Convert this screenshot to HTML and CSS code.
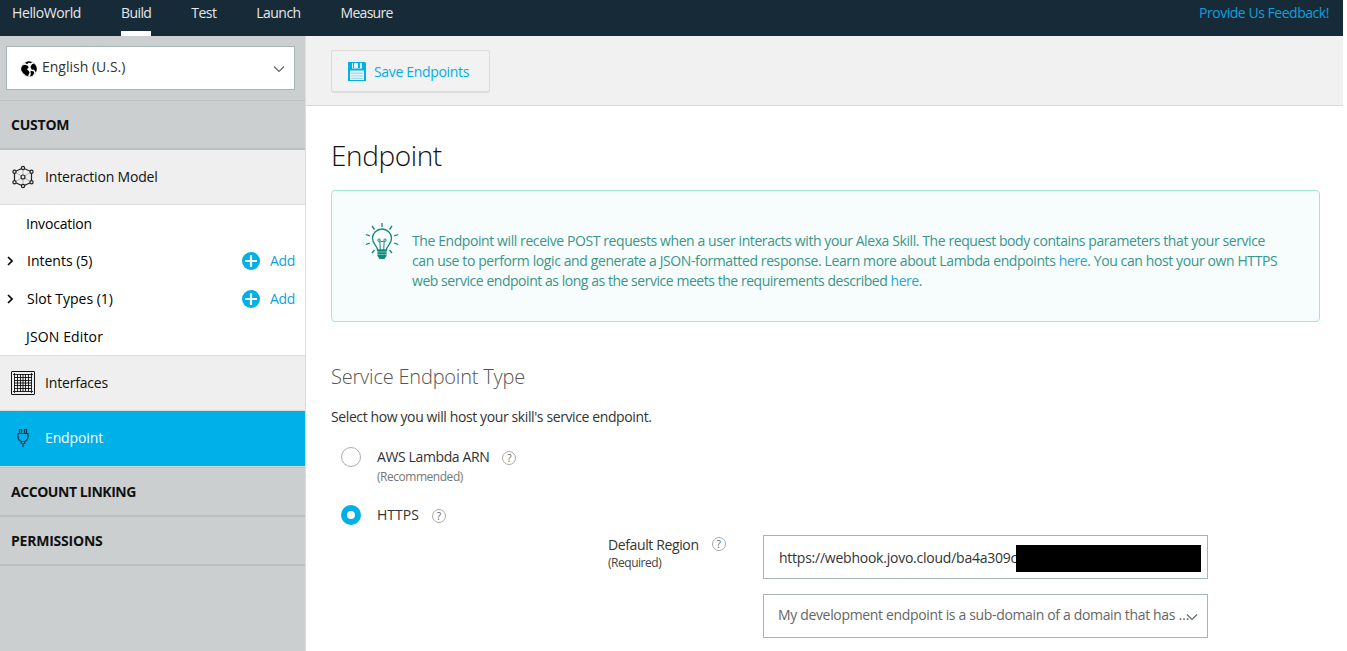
FILE: index.html
```html
<!DOCTYPE html>
<html lang="en">
<head>
<meta charset="utf-8">
<title>Endpoint</title>
<link rel="stylesheet" href="styles.css">
</head>
<body>
<div class="app">
  <header class="topbar">
    <nav class="tabs">
      <a class="tab tab-home">HelloWorld</a>
      <a class="tab tab-build active">Build</a>
      <a class="tab tab-test">Test</a>
      <a class="tab tab-launch">Launch</a>
      <a class="tab tab-measure">Measure</a>
    </nav>
    <a class="feedback">Provide Us Feedback!</a>
  </header>
  <div class="body">
    <aside class="sidebar">
      <div class="lang-area">
        <div class="lang">
          <svg class="globe" viewBox="0 0 16 16"><circle cx="8" cy="8" r="7.600" fill="#fff" stroke="#999" stroke-width=".5"/><path d="M.2 7 1.500 4.500l2.500-.8 2.500.8 1.300 1.800-1.800 2 1.300 1.200 1.300 1.700-1.500 3.800-1.800-.2-3-2.500L.4 9.500zM4 1.800 7.500.3l3.500.6-1 1.400-2.300-.5-1.700 1.500zM9.500 6l1.200-2.500L13 2.400l2 2.400.9 3.200-1 3.300-2.100-2.800-2 .3zM9.500 9.800l3.300.7.4 1.600-1.700 2.700-2.500.8.800-2.600z" fill="#000"/></svg>
          <span>English (U.S.)</span>
          <svg class="chev" viewBox="0 0 12 8"><path d="M1 1.500 6 6.500 11 1.500" fill="none" stroke="#666" stroke-width="1.200"/></svg>
        </div>
      </div>
      <div class="section">CUSTOM</div>
      <div class="item">
        <svg class="ico" viewBox="0 0 24 24" fill="none" stroke="#222" stroke-width="1.200"><path d="M12 3 20.500 6.800v10.400L12 21l-8.500-3.800V6.800z"/><path d="M12 4v16M4 7l16 10M20 7 4 17" stroke="#aaa" stroke-width=".9"/><g fill="#efefef"><circle cx="12" cy="3" r="1.600"/><circle cx="20.500" cy="6.800" r="1.600"/><circle cx="20.500" cy="17.200" r="1.600"/><circle cx="12" cy="21" r="1.600"/><circle cx="3.500" cy="17.200" r="1.600"/><circle cx="3.500" cy="6.800" r="1.600"/><circle cx="12" cy="12" r="2"/></g></svg>
        <span>Interaction Model</span>
      </div>
      <div class="tree">
        <div class="leaf">Invocation</div>
        <div class="leaf branch"><svg class="arrow" viewBox="0 0 6 10"><path d="M1 1l4 4-4 4" fill="none" stroke="#000" stroke-width="1.600"/></svg><span>Intents (5)</span>
          <a class="add"><svg viewBox="0 0 18 18"><circle cx="9" cy="9" r="9" fill="#00b0e8"/><path d="M9 3v12M3 9h12" stroke="#fff" stroke-width="2.200"/></svg><span>Add</span></a></div>
        <div class="leaf branch"><svg class="arrow" viewBox="0 0 6 10"><path d="M1 1l4 4-4 4" fill="none" stroke="#000" stroke-width="1.600"/></svg><span>Slot Types (1)</span>
          <a class="add"><svg viewBox="0 0 18 18"><circle cx="9" cy="9" r="9" fill="#00b0e8"/><path d="M9 3v12M3 9h12" stroke="#fff" stroke-width="2.200"/></svg><span>Add</span></a></div>
        <div class="leaf json">JSON Editor</div>
      </div>
      <div class="item">
        <svg class="ico" viewBox="0 0 24 24" fill="none" stroke="#111"><rect x=".5" y=".5" width="23" height="23" rx=".5"/><path d="M2 3.500h20M2 20.500h20M3.500 2v20M20.500 2v20M6.500 3v18M9.500 3v18M12 3v18M14.500 3v18M17.500 3v18M3 6.500h18M3 9.500h18M3 12h18M3 14.500h18M3 17.500h18" stroke-width=".9"/></svg>
        <span>Interfaces</span>
      </div>
      <div class="item selected">
        <svg class="ico" viewBox="0 0 24 24" fill="none" stroke="#073a4e" stroke-width="1.200"><path d="M8.500 7V3.500h2V7M13.500 7V3.500h2V7M6.500 7.500h11M7 7.500v4c0 2 1.500 3 3 4h4c1.500-1 3-2 3-4v-4M10.300 15.500v2h3.400v-2M12 17.500V21"/></svg>
        <span>Endpoint</span>
      </div>
      <div class="section section-link">ACCOUNT LINKING</div>
      <div class="section">PERMISSIONS</div>
    </aside>
    <main class="main">
      <div class="toolbar">
        <button class="save">
          <svg viewBox="0 0 18 19"><path d="M0 0h17l1 1v18H0z" fill="#00b0e8"/><path d="M4 1h10v5.500H4z" fill="#e8f6fa"/><path d="M5 1h1v5H5zM10 1h2v5h-2z" fill="#00b0e8"/><path d="M2 8.500h14V18H2z" fill="#e8f6fa"/><path d="M3 10.500h12V12H3zM3 13.200h12v1.300H3zM3 15.700h12V17H3z" fill="#a9dcec"/></svg>
          <span>Save Endpoints</span>
        </button>
      </div>
      <div class="content">
        <h1>Endpoint</h1>
        <div class="info">
          <svg class="bulb" viewBox="0 0 34 38" fill="none" stroke="#12897b" stroke-width="1.300"><path d="M12.500 27c0-4-5-6-5-11.500a9.500 9.500 0 0 1 19 0c0 5.500-5 7.500-5 11.500z"/><path d="M15.300 27l-.5-9M18.700 27l.5-9M15.500 18.500h3" stroke-width="1"/><circle cx="14" cy="17.200" r="1.200" stroke-width="1"/><circle cx="20" cy="17.200" r="1.200" stroke-width="1"/><path d="M12.500 27h9v6l-2 3h-5l-2-3z" fill="#12897b" stroke="none"/><path d="M13 29h8M13 31.500h8" stroke="#8fd0c5" stroke-width=".7"/><path d="M17 0v4M7 3l2.500 3.500M27 3l-2.500 3.500M.8 11.500l4 1.300M33.200 11.500l-4 1.300M.8 21.500l4-1.300M33.200 21.500l-4-1.300M7 30l2.500-3M27 30l-2.500-3"/></svg>
          <p><span>The Endpoint will receive POST requests when a user interacts with your Alexa Skill. The request body contains parameters that your service</span><br>
          <span class="line-learn">can use to perform logic and generate a JSON-formatted response. Learn more about Lambda endpoints <a>here</a>. You can host your own HTTPS</span><br>
          <span class="line-web">web service endpoint as long as the service meets the requirements described <a>here</a>.</span></p>
        </div>
        <h2>Service Endpoint Type</h2>
        <p class="lead">Select how you will host your skill's service endpoint.</p>
        <div class="option">
          <i class="radio"></i>
          <div><div class="opt-row"><span class="label">AWS Lambda ARN</span><b class="help">?</b></div><small>(Recommended)</small></div>
        </div>
        <div class="option">
          <i class="radio on"></i>
          <div class="opt-row"><span>HTTPS</span><b class="help">?</b></div>
        </div>
        <div class="region">
          <div class="region-label"><div class="opt-row"><span class="label">Default Region</span><b class="help">?</b></div><small>(Required)</small></div>
          <div class="fields">
            <div class="field url"><span>https://webhook.jovo.cloud/ba4a309c</span><i class="redact"></i></div>
            <div class="field select"><span>My development endpoint is a sub-domain of a domain that has …</span><svg class="chev" viewBox="0 0 12 8"><path d="M1 1.500 6 6.500 11 1.500" fill="none" stroke="#666" stroke-width="1.200"/></svg></div>
          </div>
        </div>
      </div>
    </main>
  </div>
</div>
</body>
</html>
```
FILE: styles.css
```css
* { box-sizing: border-box; }
body { margin: 0; background: #fff; font: 14px/20px "Open Sans", "Noto Sans", sans-serif; color: #333; overflow: hidden; }
h1, h2, p { margin: 0; font-weight: 400; }
svg { display: block; flex: none; }
span { white-space: nowrap; }
.app { width: 1343px; height: 651px; display: flex; flex-direction: column; }
.topbar { height: 36px; flex: none; background: #172a38; color: #e6e8ea; display: flex; justify-content: space-between; padding: 0 14px 0 12px; }
.tabs { display: flex; gap: 40px; }
.tab { height: 36px; line-height: 26px; letter-spacing: -.55px; }
.tab-home { letter-spacing: -.384px; }
.tab-build { letter-spacing: -.6px; }
.tab-measure { letter-spacing: -.725px; }
.tab.active { border-bottom: 5px solid #fff; }
.feedback { line-height: 26px; color: #109fdc; letter-spacing: -.465px; }
.body { flex: 1; display: flex; min-height: 0; }
.sidebar { width: 306px; flex: none; background: #cbcfcf; border-right: 1px solid #ddd; color: #111; }
.lang-area { height: 65px; padding: 10px 10px 0 6px; border-bottom: 1px solid #bfc1c2; }
.lang { height: 44px; border: 1px solid #a5b5b2; background: #fff; display: flex; align-items: center; padding: 0 9px 2px 14px; color: #333; }
.globe { width: 16px; height: 16px; margin: 3px 5px 0 0; }
.chev { width: 12px; height: 8px; margin-left: auto; margin-top: 3px; }
.section { height: 49px; border-bottom: 2px solid #bebfc1; padding-left: 11px; line-height: 48px; font-weight: 700; letter-spacing: -.22px; }
.section-link { height: 50px; border-top: 1px solid #bebfc1; letter-spacing: -.449px; }
.item { height: 55px; background: #efefef; border-bottom: 1px solid #dcdcdc; display: flex; align-items: center; gap: 10px; padding-left: 11px; letter-spacing: -.18px; }
.ico { width: 24px; height: 24px; }
.selected { background: #00b0e8; color: #fff; height: 56px; padding-bottom: 1px; letter-spacing: -.129px; }
.tree { height: 151px; background: #fff; border-bottom: 1px solid #dcdcdc; color: #000; }
.leaf { height: 38px; padding: 0 10px 0 26px; display: flex; align-items: center; }
.leaf:first-child { height: 37px; letter-spacing: -.194px; }
.json { letter-spacing: .134px; }
.branch { padding-left: 7px; }
.arrow { width: 6px; height: 10px; margin-right: 14px; }
.add { margin-left: auto; display: flex; align-items: center; gap: 10px; color: #109fdc; letter-spacing: -.328px; }
.add svg { width: 18px; height: 18px; }
.main { flex: 1; min-width: 0; }
.toolbar { height: 70px; background: #f1f1f1; border-bottom: 1px solid #d9d9d9; padding: 14px 25px; }
.save { width: 159px; height: 43px; border: 1px solid #dcdcdc; border-bottom-width: 2px; border-radius: 3px; background: #f2f2f2; font: inherit; letter-spacing: -.333px; color: #00aee6; display: flex; align-items: center; padding: 0 0 0 16px; gap: 8px; }
.save svg { width: 18px; height: 19px; }
.save span { padding-top: 2px; }
.content { padding: 31px 23px 0 25px; }
h1 { font-size: 28px; line-height: 36px; font-weight: 300; letter-spacing: -.4px; color: #111; }
.info { margin-top: 17px; height: 132px; border: 1px solid #a3e6cf; border-radius: 4px; background: #f7fdfd; display: flex; padding: 32px 0 0 33px; color: #3a958a; letter-spacing: -.414px; }
.line-learn { letter-spacing: -.393px; }
.line-web { letter-spacing: -.46px; }
.bulb { width: 34px; height: 38px; }
.info p { padding: 8px 0 0 13px; }
.info a { color: #2aa5dc; }
h2 { margin-top: 40px; font-size: 20px; line-height: 30px; font-weight: 300; letter-spacing: -.2px; color: #555; }
.lead { margin-top: 15px; letter-spacing: -.39px; }
.option { display: flex; margin-top: 20px; padding-left: 10px; gap: 16px; }
.radio { width: 20px; height: 20px; border: 1px solid #aab; border-radius: 50%; flex: none; }
.radio.on { border: 6px solid #00b0e8; }
.opt-row { display: flex; align-items: center; gap: 13px; }
.label { letter-spacing: -.38px; }
small { display: block; font-size: 12px; line-height: 18px; letter-spacing: -.47px; color: #777; }
.help { width: 14px; height: 14px; margin-top: 2px; border: 1px solid #aaa; border-radius: 50%; font: 10px/12px "Open Sans", sans-serif; letter-spacing: 0; text-align: center; color: #666; }
.option small { padding-top: 1px; line-height: 17px; }
.region { display: flex; padding-left: 277px; margin-top: 10px; }
.region-label { width: 155px; flex: none; }
.region-label .help { margin-top: -2px; }
.region-label small { line-height: 16px; color: #444; }
.fields { width: 445px; flex: none; }
.field { height: 44px; border: 1px solid #a5b5b2; margin-bottom: 15px; display: flex; align-items: center; padding: 0 6px 0 15px; }
.url { letter-spacing: -.238px; padding-top: 2px; }
.redact { width: 185px; height: 27px; flex: none; margin-left: -1px; background: #000; }
.select { padding: 0 9px 2px 14px; letter-spacing: -.341px; color: #666; }
.select span { width: 408px; flex: none; }
```
